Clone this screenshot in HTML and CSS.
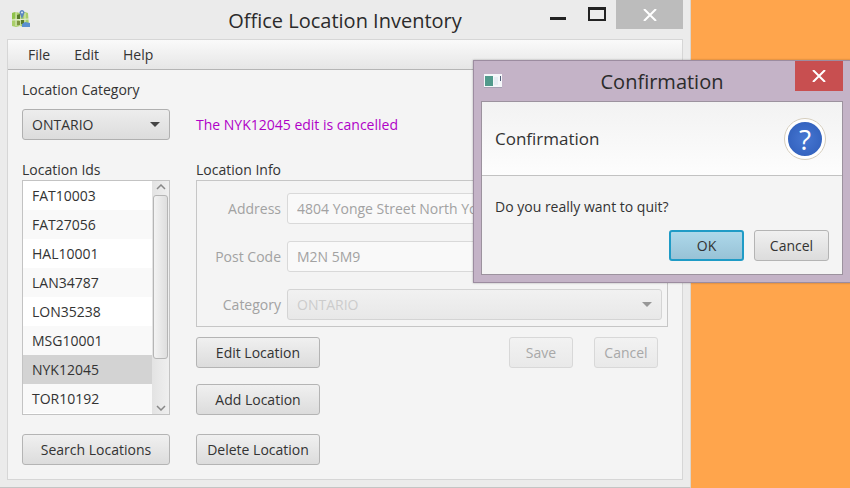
FILE: index.html
```html
<!DOCTYPE html>
<html lang="en">
<head>
<meta charset="utf-8">
<title>Office Location Inventory</title>
<link rel="stylesheet" href="styles.css">
</head>
<body>
<main class="window">
  <header class="titlebar">
    <svg class="app-icon" width="20" height="20" viewBox="0 0 20 20" aria-hidden="true">
      <path d="M1 4l4-1 4 1 5-1 3 1 1 13-4 1-5-1-4 1-4-1z" fill="#a9cf68"/>
      <path d="M1 4l4-1v6l-4 1z" fill="#8fc34a"/>
      <path d="M5 3v14M9 5v12M14 4v13" stroke="#dfe9cb"/>
      <path d="M1 11l17-1" stroke="#e6efd8"/>
      <path d="M6 6l3-1v5H6zM10 11h3v4h-3z" fill="#587b2b"/>
      <path d="M6 12h3v4H6z" fill="#7d9440"/>
      <path d="M11 15l3-2 5 1v4h-8z" fill="#5a8fd0"/>
      <path d="M11 10L9 5a2.500 2.500 0 1 1 4 0z" fill="#5b86c0"/>
      <circle cx="11" cy="3.500" r="1" fill="#dce8f5"/>
    </svg>
    <h1 class="title">Office Location Inventory</h1>
    <div class="controls">
      <button class="control" type="button" aria-label="Minimize"><svg width="16" height="14" viewBox="0 0 16 14"><path d="M0 11.500h16" stroke="#222" stroke-width="3"/></svg></button>
      <button class="control" type="button" aria-label="Maximize"><svg width="18" height="14" viewBox="0 0 18 14"><path d="M1 2v11h16V2" fill="none" stroke="#222" stroke-width="2"/><path d="M0 1.500h18" stroke="#222" stroke-width="3"/></svg></button>
      <button class="control close" type="button" aria-label="Close"><svg width="14" height="12" viewBox="0 0 14 12"><path d="M1 0l12 12M13 0L1 12" stroke="#fff" stroke-width="2"/></svg></button>
    </div>
  </header>
  <div class="client">
    <nav class="menubar">
      <button class="menu" type="button">File</button>
      <button class="menu" type="button">Edit</button>
      <button class="menu" type="button">Help</button>
    </nav>
    <div class="content">
      <div class="top">
        <label class="label" for="filter">Location Category</label>
        <div class="select">
          <select id="filter" class="field combo"><option>ONTARIO</option></select>
          <svg class="arrow" width="10" height="5" viewBox="0 0 10 5"><path d="M0 0h10L5 5z"/></svg>
        </div>
        <p class="message" role="status">The NYK12045 edit is cancelled</p>
      </div>
      <div class="columns">
        <section class="ids">
          <h2 class="label" id="ids-label">Location Ids</h2>
          <div class="listbox">
            <ul class="list" role="listbox" aria-labelledby="ids-label">
              <li class="item" role="option">FAT10003</li>
              <li class="item" role="option">FAT27056</li>
              <li class="item" role="option">HAL10001</li>
              <li class="item" role="option">LAN34787</li>
              <li class="item" role="option">LON35238</li>
              <li class="item" role="option">MSG10001</li>
              <li class="item selected" role="option" aria-selected="true">NYK12045</li>
              <li class="item" role="option">TOR10192</li>
            </ul>
            <div class="scrollbar" aria-hidden="true">
              <svg class="step" width="10" height="6" viewBox="0 0 10 6"><path d="M1 5l4-4 4 4"/></svg>
              <div class="track"><div class="thumb"></div></div>
              <svg class="step" width="10" height="6" viewBox="0 0 10 6"><path d="M1 1l4 4 4-4"/></svg>
            </div>
          </div>
          <button class="button search" type="button">Search Locations</button>
        </section>
        <section class="info">
          <h2 class="label">Location Info</h2>
          <form class="form">
            <label class="form-label" for="address">Address</label>
            <input id="address" class="field input" type="text" value="4804 Yonge Street North York" disabled>
            <label class="form-label" for="post">Post Code</label>
            <input id="post" class="field input" type="text" value="M2N 5M9" disabled>
            <label class="form-label" for="category">Category</label>
            <div class="select">
              <select id="category" class="field combo" disabled><option>ONTARIO</option></select>
              <svg class="arrow faded" width="10" height="5" viewBox="0 0 10 5"><path d="M0 0h10L5 5z"/></svg>
            </div>
          </form>
          <div class="actions">
            <button class="button" type="button">Edit Location</button>
            <div class="pair">
              <button class="button" type="button" disabled>Save</button>
              <button class="button" type="button" disabled>Cancel</button>
            </div>
            <button class="button add" type="button">Add Location</button>
            <button class="button delete" type="button">Delete Location</button>
          </div>
        </section>
      </div>
    </div>
  </div>
</main>
<section class="dialog" role="dialog" aria-labelledby="dialog-title">
  <header class="dialog-titlebar">
    <svg class="dialog-icon" width="18" height="14" viewBox="0 0 18 14" aria-hidden="true">
      <path d="M0 0h18v14H0z" fill="#f5f7fa"/>
      <path d="M1 2h8v10H1z" fill="#519a8c"/>
      <path d="M10 3h4v8h-4z" fill="#e6edf3"/>
      <path d="M16 2h1v5h-1z" fill="#53617a"/>
      <path d="M0 13.500h18" stroke="#a6a0b3"/>
    </svg>
    <h2 class="title" id="dialog-title">Confirmation</h2>
    <button class="dialog-close" type="button" aria-label="Close"><svg width="14" height="12" viewBox="0 0 14 12"><path d="M1 0l12 12M13 0L1 12" stroke="#fff" stroke-width="2"/></svg></button>
  </header>
  <div class="dialog-body">
    <div class="dialog-head">
      <h3 class="heading">Confirmation</h3>
      <div class="question" aria-hidden="true">?</div>
    </div>
    <p class="prompt">Do you really want to quit?</p>
    <div class="dialog-actions">
      <button class="button primary" type="button">OK</button>
      <button class="button" type="button">Cancel</button>
    </div>
  </div>
</section>
</body>
</html>
```
FILE: styles.css
```css
* { box-sizing: border-box; }

body {
  margin: 0;
  min-height: 100vh;
  overflow: hidden;
  background: #ffa54c;
  color: #333;
  font: 14px/20px "Open Sans", "Noto Sans", sans-serif;
}

h1, h2, h3, p, ul { margin: 0; padding: 0; font-weight: 400; }
button, input, select { font: inherit; color: inherit; margin: 0; }
svg { display: block; }

.window {
  display: flex;
  flex-direction: column;
  min-height: 100vh;
  margin-right: 159px;
  padding: 0 7px 7px;
  background: #ebebeb;
  border-right: 1px solid #ddd5cc;
  border-bottom: 1px solid #c4c4c4;
}

.titlebar {
  display: grid;
  grid-template-columns: 1fr auto 1fr;
  height: 39px;
}
.app-icon { margin: 9px 0 0 4px; }
.title { font-size: 20px; line-height: 42px; color: #2b2b2b; white-space: nowrap; }
.controls { display: flex; justify-content: flex-end; align-items: flex-start; }
.control {
  display: flex;
  justify-content: center;
  align-items: center;
  width: 39px;
  height: 28px;
  padding: 0;
  border: 0;
  background: none;
}
.control.close { width: 67px; height: 29px; background: #bcbcbc; }

.client {
  flex: 1;
  border: 1px solid #d6d6d6;
  background: #f4f4f4;
}
.menubar {
  display: flex;
  height: 30px;
  padding: 0 8px;
  background: linear-gradient(#fafafa, #e6e6e6);
  border-bottom: 1px solid #b5b5b5;
}
.menu { padding: 0 12px; border: 0; background: none; }

.content { padding: 10px 14px 13px; }
.label { font-size: 14px; line-height: 20px; }
.top {
  display: grid;
  grid-template-columns: 148px 1fr;
  gap: 9px 26px;
  align-items: center;
}
.top .label { grid-column: 1 / -1; }
.message { color: #b000c8; }

.columns {
  display: grid;
  grid-template-columns: 148px 1fr;
  column-gap: 26px;
  margin-top: 20px;
}

.select { position: relative; }
.field {
  display: block;
  width: 100%;
  height: 31px;
  padding: 0 9px;
  border: 1px solid #b0b0b0;
  border-radius: 3px;
  appearance: none;
}
.combo { background: linear-gradient(#ededed, #dcdcdc); }
.input { background: #fff; }
.arrow { position: absolute; top: 13px; right: 10px; fill: #444; }
.faded { opacity: 0.5; }
.input:disabled { color: #a2a2a2; background: #f9f9f9; border-color: #d9d9d9; }
.combo:disabled {
  color: #ccc;
  background: linear-gradient(#f1f1f1, #e8e8e8);
  border-color: #d4d4d4;
  opacity: 1;
}

.listbox { display: flex; height: 235px; border: 1px solid #c3c3c3; background: #fff; }
.list { flex: 1; list-style: none; overflow: hidden; }
.item { height: 29px; padding: 0 9px; line-height: 29px; }
.item:nth-child(even) { background: #f9f9f9; }
.item.selected { background: #d3d3d3; }
.scrollbar {
  display: flex;
  flex-direction: column;
  align-items: center;
  width: 17px;
  padding: 3px 1px;
  background: linear-gradient(90deg, #e3e3e3, #efefef);
}
.step { fill: none; stroke: #888; stroke-width: 1.5px; }
.track { flex: 1; width: 100%; padding: 5px 0; }
.thumb {
  height: 80%;
  border: 1px solid #b5b5b5;
  border-radius: 3px;
  background: linear-gradient(90deg, #f3f3f3, #dedede);
}

.button {
  height: 31px;
  padding: 0 8px;
  border: 1px solid #b4b4b4;
  border-radius: 3px;
  background: linear-gradient(#f0f0f0, #dcdcdc);
  white-space: nowrap;
}
.button:disabled {
  color: #a8a8a8;
  border-color: #d8d8d8;
  background: linear-gradient(#f2f2f2, #e9e9e9);
}
.search { width: 100%; margin-top: 19px; }

.form {
  display: grid;
  grid-template-columns: 84px 1fr;
  gap: 17px 6px;
  align-items: center;
  padding: 12px 5px 6px 0;
  border: 1px solid #c6c6c6;
}
.form-label { color: #a2a2a2; text-align: right; }

.actions {
  display: grid;
  grid-template-columns: 124px 1fr;
  margin-top: 10px;
}
.pair { display: flex; justify-content: flex-end; gap: 21px; padding-right: 10px; }
.pair .button { width: 64px; }
.add { grid-column: 1; margin-top: 16px; }
.delete { grid-column: 1; margin-top: 19px; }

.dialog {
  position: absolute;
  top: 60px;
  right: -1px;
  width: 378px;
  padding: 0 7px 7px;
  border: 1px solid #9c8ca0;
  background: #c4b3c7;
  box-shadow: 0 0 2px rgb(0 0 0 / 30%);
}
.dialog-titlebar {
  display: grid;
  grid-template-columns: 1fr auto 1fr;
  height: 40px;
}
.dialog-icon { margin: 13px 0 0 3px; }
.dialog-close {
  display: flex;
  justify-content: center;
  align-items: center;
  justify-self: end;
  width: 48px;
  height: 30px;
  padding: 0;
  border: 0;
  background: #c84f50;
}
.dialog-body { border: 1px solid #9c929e; background: #f4f4f4; }
.dialog-head {
  display: flex;
  justify-content: space-between;
  align-items: center;
  height: 74px;
  padding: 0 16px 0 13px;
  border-bottom: 1px solid #c2c2c2;
  background: linear-gradient(#f2f2f2, #fdfdfd);
}
.heading { font-size: 17px; line-height: 24px; }
.question {
  width: 42px;
  height: 42px;
  border: 4px solid #fff;
  border-radius: 50%;
  outline: 1px solid #d5cdbd;
  outline-offset: -1px;
  background: radial-gradient(#4777d2, #2d5cb8);
  color: #fff;
  font-size: 28px;
  line-height: 34px;
  text-align: center;
}
.prompt { padding: 21px 13px 0; }
.dialog-actions {
  display: flex;
  justify-content: flex-end;
  gap: 10px;
  padding: 13px;
}
.dialog-actions .button { width: 75px; }
.button.primary {
  border: 2px solid #1f9bc6;
  background: linear-gradient(#add8ea, #98c2d6);
}
```
